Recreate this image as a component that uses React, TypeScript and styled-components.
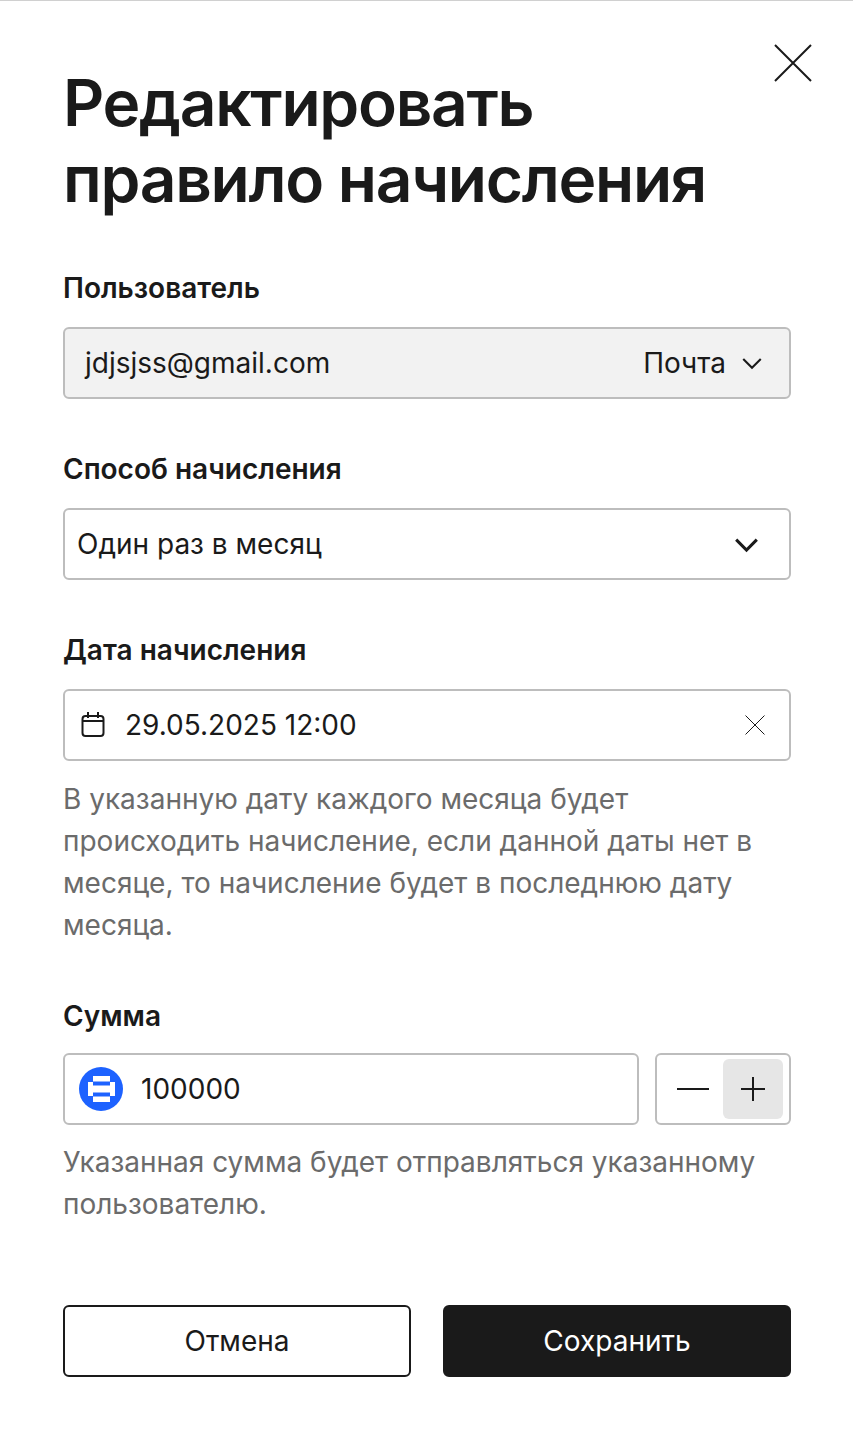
import React from 'react'
import styled, { createGlobalStyle } from 'styled-components'

const GlobalStyle = createGlobalStyle`
  html, body {
    margin: 0;
    padding: 0;
    background: #fff;
  }
  * {
    box-sizing: border-box;
  }
`

const Modal = styled.div`
  position: relative;
  width: 853px;
  height: 1439px;
  padding: 64px 62px 0 63px;
  border-top: 1px solid #d0d0d0;
  background: #fff;
  color: #1a1a1a;
  font-family: Inter, "Liberation Sans", sans-serif;
`

const CloseButton = styled.button`
  position: absolute;
  top: 43px;
  right: 41px;
  width: 38px;
  height: 38px;
  padding: 0;
  border: 0;
  background: none;
  display: block;
`

const Title = styled.h1`
  margin: 0 0 53px;
  font-size: 64px;
  line-height: 76px;
  font-weight: 600;
  letter-spacing: -1.28px;
`

const Group = styled.section`
  display: flex;
  flex-direction: column;
  margin-bottom: 52px;
`

const Label = styled.label<{ $gap?: number }>`
  font-size: 28px;
  line-height: 36px;
  font-weight: 600;
  margin-bottom: ${p => p.$gap ?? 21}px;
`

const Field = styled.div<{ $muted?: boolean; $pad?: number }>`
  flex: 1 0 auto;
  height: 72px;
  display: flex;
  align-items: center;
  padding: 0 ${p => p.$pad ?? 14}px;
  border: 2px solid #bdbdbd;
  border-radius: 6px;
  background: ${p => (p.$muted ? '#f2f2f2' : '#fff')};
  font-size: 28px;
`

const Value = styled.span`
  flex: 1;
  line-height: 36px;
`

const Hint = styled.p<{ $gap: number }>`
  margin: ${p => p.$gap}px 0 0;
  font-size: 28px;
  line-height: 42px;
  color: #6b6b6b;
`

const AmountRow = styled.div`
  display: flex;
  gap: 16px;
`

const AmountField = styled(Field)`
  flex: 1 1 0;
`

const Stepper = styled.div`
  width: 136px;
  height: 72px;
  flex: none;
  display: flex;
  align-items: center;
  justify-content: space-between;
  padding: 4px 6px 4px 4px;
  border: 2px solid #bdbdbd;
  border-radius: 6px;
`

const StepButton = styled.button<{ $active?: boolean }>`
  width: 60px;
  height: 60px;
  padding: 0 0 0 ${p => (p.$active ? 0 : 4)}px;
  display: flex;
  align-items: center;
  justify-content: center;
  border: 0;
  border-radius: 6px;
  background: ${p => (p.$active ? '#e6e6e6' : 'transparent')};
`

const Actions = styled.div`
  display: grid;
  grid-template-columns: 1fr 1fr;
  gap: 32px;
  margin-top: 80px;
`

const ActionButton = styled.button<{ $primary?: boolean }>`
  height: 72px;
  border: 2px solid #1a1a1a;
  border-radius: 6px;
  background: ${p => (p.$primary ? '#1a1a1a' : '#fff')};
  color: ${p => (p.$primary ? '#fff' : '#1a1a1a')};
  font-family: inherit;
  font-size: 28px;
  font-weight: 400;
`

const TypeLabel = styled.span`
  line-height: 36px;
  margin-right: 12px;
`

const TrailIcon = styled.span<{ $gap: number }>`
  display: flex;
  margin-right: ${p => p.$gap}px;
`

const LeadIcon = styled.svg<{ $gap: number }>`
  flex: none;
  margin-right: ${p => p.$gap}px;
`

const Chevron = ({ size, width }: { size: number; width: number }) => (
  <svg width={size} height={size} viewBox="0 0 24 24" fill="none" stroke="#1a1a1a" strokeWidth={width}>
    <path d="M4.5 8.5 12 16l7.5-7.5" />
  </svg>
)

const Cross = ({ size, width }: { size: number; width: number }) => (
  <svg width={size} height={size} viewBox="0 0 38 38" fill="none" stroke="#1a1a1a" strokeWidth={width} style={{ display: 'block' }}>
    <path d="M1 1l36 36M37 1 1 37" />
  </svg>
)

const App = () => {
  return (
    <Modal>
      <GlobalStyle />
      <CloseButton aria-label="Закрыть">
        <Cross size={38} width={2} />
      </CloseButton>

      <Title>
        Редактировать
        <br />
        правило начисления
      </Title>

      <Group>
        <Label>Пользователь</Label>
        <Field $muted $pad={20}>
          <Value>jdjsjss@gmail.com</Value>
          <TypeLabel>Почта</TypeLabel>
          <TrailIcon $gap={3}>
            <Chevron size={28} width={1.8} />
          </TrailIcon>
        </Field>
      </Group>

      <Group>
        <Label>Способ начисления</Label>
        <Field $pad={12}>
          <Value>Один раз в месяц</Value>
          <TrailIcon $gap={14}>
            <Chevron size={33} width={2.2} />
          </TrailIcon>
        </Field>
      </Group>

      <Group>
        <Label>Дата начисления</Label>
        <Field>
          <LeadIcon $gap={18} width="28" height="28" viewBox="0 0 28 28" fill="none" stroke="#1a1a1a" strokeWidth="2">
            <rect x="3.500" y="5" width="21" height="20" rx="3" />
            <path d="M3.500 10h21M9 1v6M19 1v6" />
          </LeadIcon>
          <Value>29.05.2025 12:00</Value>
          <TrailIcon $gap={10}>
            <Cross size={20} width={1.9} />
          </TrailIcon>
        </Field>
        <Hint $gap={17}>
          В указанную дату каждого месяца будет происходить начисление, если данной даты нет в месяце, то
          начисление будет в последнюю дату месяца.
        </Hint>
      </Group>

      <Group>
        <Label $gap={19}>Сумма</Label>
        <AmountRow>
          <AmountField>
            <LeadIcon $gap={18} width="44" height="44" viewBox="0 0 44 44">
              <circle cx="22" cy="22" r="22" fill="#1d62ff" />
              <path
                fill="#fff"
                fillRule="evenodd"
                d="M14 9h17v6h5v14h-5v6H14v-6H9V15h5zM14 14.500v4h17v-4zM14 25.500v4h17v-4z"
              />
            </LeadIcon>
            <Value>100000</Value>
          </AmountField>
          <Stepper>
            <StepButton aria-label="Уменьшить">
              <svg width="32" height="2" viewBox="0 0 32 2">
                <path d="M0 1h32" stroke="#1a1a1a" strokeWidth="2" />
              </svg>
            </StepButton>
            <StepButton $active aria-label="Увеличить">
              <svg width="24" height="24" viewBox="0 0 24 24">
                <path d="M0 12h24M12 0v24" stroke="#1a1a1a" strokeWidth="2" />
              </svg>
            </StepButton>
          </Stepper>
        </AmountRow>
        <Hint $gap={16}>Указанная сумма будет отправляться указанному пользователю.</Hint>
      </Group>

      <Actions>
        <ActionButton>Отмена</ActionButton>
        <ActionButton $primary>Сохранить</ActionButton>
      </Actions>
    </Modal>
  )
}

export default App
